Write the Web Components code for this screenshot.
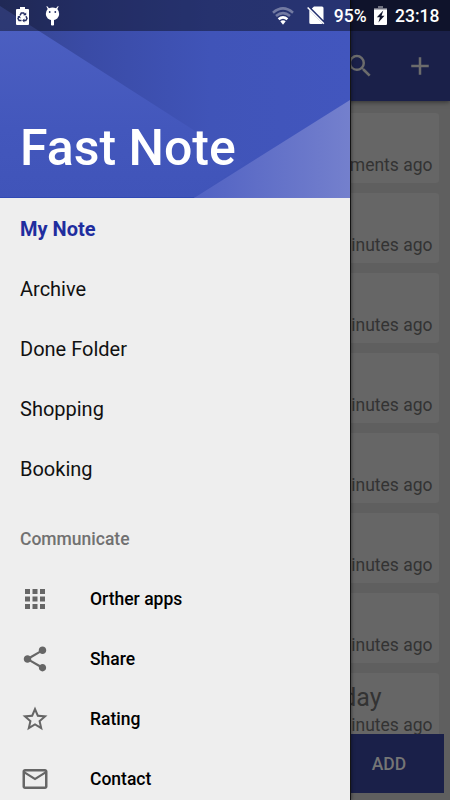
<!DOCTYPE html>
<html lang="en">
<head>
<meta charset="utf-8">
<title>Fast Note</title>
<style>
    body {
        margin: 0;
        font-family: Roboto, sans-serif;
    }
</style>
</head>
<body>
<fast-note-app></fast-note-app>

<script>
const ICONS = {
    search: '<path d="M15.5 14h-.79l-.28-.27A6.47 6.47 0 0 0 16 9.5 6.5 6.5 0 1 0 9.5 16c1.61 0 3.09-.59 4.23-1.57l.27.28v.79l5 4.99L20.49 19l-4.99-5zm-6 0C7.01 14 5 11.99 5 9.5S7.01 5 9.5 5 14 7.01 14 9.5 11.99 14 9.5 14z"/>',
    add: '<path d="M19 13h-6v6h-2v-6H5v-2h6V5h2v6h6v2z"/>',
    apps: '<path d="M4 8h4V4H4v4zm6 12h4v-4h-4v4zm-6 0h4v-4H4v4zm0-6h4v-4H4v4zm6 0h4v-4h-4v4zm6-10v4h4V4h-4zm-6 4h4V4h-4v4zm6 6h4v-4h-4v4zm0 6h4v-4h-4v4z"/>',
    share: '<path d="M18 16.08c-.76 0-1.44.3-1.96.77L8.91 12.7c.05-.23.09-.46.09-.7s-.04-.47-.09-.7l7.05-4.11c.54.5 1.25.81 2.04.81 1.66 0 3-1.34 3-3s-1.34-3-3-3-3 1.34-3 3c0 .24.04.47.09.7L8.04 9.81C7.5 9.31 6.79 9 6 9c-1.66 0-3 1.34-3 3s1.34 3 3 3c.79 0 1.5-.31 2.04-.81l7.12 4.16c-.05.21-.08.43-.08.65 0 1.61 1.31 2.92 2.92 2.92s2.92-1.31 2.92-2.92-1.31-2.92-2.92-2.92z"/>',
    star: '<path d="M22 9.24l-7.19-.62L12 2 9.19 8.63 2 9.24l5.46 4.73L5.82 21 12 17.27 18.18 21l-1.63-7.03L22 9.24zM12 15.4l-3.76 2.27 1-4.28-3.32-2.88 4.38-.38L12 6.1l1.71 4.04 4.38.38-3.32 2.88 1 4.28L12 15.4z"/>',
    mail: '<path d="M20 4H4c-1.1 0-1.99.9-1.99 2L2 18c0 1.1.9 2 2 2h16c1.1 0 2-.9 2-2V6c0-1.1-.9-2-2-2zm0 14H4V8l8 5 8-5v10zm-8-7L4 6h16l-8 5z"/>'
};

class MdIcon extends HTMLElement {
    constructor() {
        super();
        this.attachShadow({ mode: 'open' });
    }

    connectedCallback() {
        this.shadowRoot.innerHTML = `
            <style>
                :host { display: block; width: 30px; height: 30px; }
                svg { display: block; width: 100%; height: 100%; fill: currentColor; }
            </style>
            <svg viewBox="0 0 24 24">${ICONS[this.getAttribute('name')] || ''}</svg>
        `;
    }
}

// Translucent bar above everything else
class StatusBar extends HTMLElement {
    constructor() {
        super();
        this.attachShadow({ mode: 'open' });
    }

    connectedCallback() {
        this.shadowRoot.innerHTML = `
            <style>
                :host {
                    display: flex;
                    align-items: center;
                    box-sizing: border-box;
                    height: 31px;
                    padding: 0 10.5px 0 16px;
                    background: rgba(0, 0, 0, .4);
                    color: #fff;
                    font-size: 17.5px;
                    font-weight: 500;
                }
                svg { display: block; fill: #fff; flex: none; }
                span { padding-top: 1px; }
                .droid { margin-left: 16px; }
                .wifi { margin-left: auto; }
                .sim { margin: 0 9px 0 13px; }
                .battery { margin: 0 8px 0 7.5px; }
            </style>
            <svg width="13" height="18" viewBox="0 0 13 18">
                <path d="M4 0h5v2h3q1 0 1 1v14q0 1-1 1H1q-1 0-1-1V3q0-1 1-1h3z"/>
                <g fill="none" stroke="#252e63" stroke-width="1.5">
                    <path d="M4.1 8.3 5.3 6h2.4l1.1 2M10 9.3l1 2.2-1.2 2.1H7.5M5.5 13.6H3.1L2 11.5l1-2"/>
                </g>
                <path fill="#252e63" d="M7.2 8.3h3V5.6zM8.4 11.5v4L6.2 13.6zM1.3 9.5l2.5-.7 1 2.6z"/>
            </svg>
            <svg class="droid" width="15" height="20" viewBox="0 0 15 20">
                <path d="M2 0l2 2.2Q7.5.8 11 2.2L13 0l.6.6L12.3 3Q14.2 5 14.2 8a6.7 6.2 0 0 1-13.4 0Q.8 5 2.7 3L1.4.6z"/>
                <path d="M6 13h3v6q-1.5 1.2-3 0z"/>
                <circle cx="4.7" cy="6" r=".9" fill="#252e63"/>
                <circle cx="10.3" cy="6" r=".9" fill="#252e63"/>
            </svg>
            <svg class="wifi" width="22" height="18" viewBox="0 0 22 18">
                <g fill="none" stroke="#fff" stroke-width="2.6">
                    <path opacity=".35" d="M1 5.7Q11-2.8 21 5.7"/>
                    <path opacity=".35" d="M4 9Q11 3.1 18 9"/>
                    <path d="M6.6 12.3Q11 8.4 15.4 12.3"/>
                </g>
                <path d="M8.3 14.2Q11 12.2 13.7 14.2L11 17.8z"/>
            </svg>
            <svg class="sim" width="18" height="19" viewBox="0 0 18 19">
                <path d="M7 .5h8q1.5 0 1.5 1.5v12.3L4.8 2.6z"/>
                <path d="M2.3 4 15.5 17.2l-.8.8H3.8q-1.5 0-1.5-1.5z"/>
                <path d="M1.2 1 17.4 17.2l-1.1 1.1L.1 2.1z"/>
            </svg>
            <span>95%</span>
            <svg class="battery" width="13" height="19" viewBox="0 0 13 19">
                <path opacity=".4" d="M4 0h5v2h4v2H0V2h4z"/>
                <path fill-rule="evenodd" d="M0 3.5h13V18q0 1-1 1H1q-1 0-1-1zM9.3 4.6 2.8 11.2h3.1L4.4 16.6 10.5 9.8H7.5z"/>
            </svg>
            <span>23:18</span>
        `;
    }
}

class NoteCard extends HTMLElement {
    constructor() {
        super();
        this.attachShadow({ mode: 'open' });
    }

    connectedCallback() {
        this.shadowRoot.innerHTML = `
            <style>
                :host {
                    display: flex;
                    flex-direction: column;
                    justify-content: space-between;
                    align-items: flex-end;
                    box-sizing: border-box;
                    flex: none;
                    height: 70px;
                    padding: 8px 6.5px 7.5px;
                    border-radius: 3px;
                    background: #666;
                    color: #333;
                    font-size: 17.5px;
                    line-height: 20px;
                }
                .title {
                    padding-right: 51px;
                    font-size: 25px;
                    line-height: 33px;
                }
            </style>
            <div class="title"><slot name="title"></slot></div>
            <div><slot></slot></div>
        `;
    }
}

class NotePage extends HTMLElement {
    constructor() {
        super();
        this.attachShadow({ mode: 'open' });
    }

    connectedCallback() {
        this.shadowRoot.innerHTML = `
            <style>
                :host {
                    display: flex;
                    flex-direction: column;
                    height: 800px;
                    background: #5f5f5f;
                    overflow: hidden;
                }
                header {
                    display: flex;
                    justify-content: flex-end;
                    align-items: center;
                    flex: none;
                    box-sizing: border-box;
                    height: 101px;
                    padding: 31px 15px 0;
                    gap: 30px;
                    background: #1a2049;
                    color: #6c6c6c;
                    box-shadow: 0 1px 5px rgba(0, 0, 0, .5);
                }
                main {
                    display: flex;
                    flex-direction: column;
                    gap: 10px;
                    flex: 1;
                    min-height: 0;
                    overflow: hidden;
                    padding: 11.5px 11px 0;
                    box-sizing: border-box;
                }
                footer {
                    display: flex;
                    justify-content: flex-end;
                    flex: none;
                    height: 66.5px;
                    padding: 0 6px 0 0;
                }
                button {
                    width: 110px;
                    height: 59.5px;
                    padding: 1px 0 0;
                    border: 0;
                    background: #1a2049;
                    color: #757575;
                    font: 500 17.5px Roboto, sans-serif;
                }
            </style>
            <header>
                <md-icon name="search"></md-icon>
                <md-icon name="add"></md-icon>
            </header>
            <main><slot></slot></main>
            <footer><button>ADD</button></footer>
        `;
    }
}

class DrawerItem extends HTMLElement {
    constructor() {
        super();
        this.attachShadow({ mode: 'open' });
    }

    connectedCallback() {
        const icon = this.getAttribute('icon');
        this.shadowRoot.innerHTML = `
            <style>
                :host {
                    display: flex;
                    align-items: center;
                    flex: none;
                    height: 60px;
                    padding: 0 20px;
                    gap: 40px;
                    color: #111;
                    font-size: 20px;
                }
                :host([active]) { color: #1f2d9e; font-weight: 700; }
                :host([icon]) { color: #000; font-size: 17.5px; font-weight: 500; }
                :host([heading]) {
                    margin-top: 10px;
                    color: #717171;
                    font-size: 17.5px;
                    font-weight: 500;
                }
                md-icon { color: #666; margin-top: -1px; }
            </style>
            ${icon ? `<md-icon name="${icon}"></md-icon>` : ''}
            <span><slot></slot></span>
        `;
    }
}

class NavDrawer extends HTMLElement {
    constructor() {
        super();
        this.attachShadow({ mode: 'open' });
    }

    connectedCallback() {
        this.shadowRoot.innerHTML = `
            <style>
                :host {
                    display: flex;
                    flex-direction: column;
                    width: 350px;
                    height: 800px;
                    overflow: hidden;
                    background: #eee;
                }
                header {
                    display: grid;
                    flex: none;
                    height: 198px;
                    margin-bottom: 1px;
                }
                header > * { grid-area: 1 / 1; }
                svg { display: block; }
                h1 {
                    align-self: end;
                    margin: 0 0 21px 20px;
                    color: #fff;
                    font-size: 50px;
                    line-height: 58px;
                    font-weight: 500;
                }
            </style>
            <header>
                <svg width="350" height="198" viewBox="0 0 350 198">
                    <defs>
                        <linearGradient id="top">
                            <stop offset="0" stop-color="#36458f"/>
                            <stop offset=".25" stop-color="#3a4ba6"/>
                            <stop offset=".6" stop-color="#4054b8"/>
                            <stop offset="1" stop-color="#4256be"/>
                        </linearGradient>
                        <linearGradient id="left" gradientUnits="userSpaceOnUse" x1="0" y1="0" x2="0" y2="198">
                            <stop offset="0" stop-color="#4e61c2"/>
                            <stop offset=".65" stop-color="#4357bc"/>
                            <stop offset="1" stop-color="#4054b9"/>
                        </linearGradient>
                        <linearGradient id="corner">
                            <stop offset="0" stop-color="#5162c3"/>
                            <stop offset="1" stop-color="#7480cd"/>
                        </linearGradient>
                    </defs>
                    <path fill="url(#top)" d="M0 0h350v198H0z"/>
                    <path fill="url(#left)" d="M0 6 245 163 194 198H0z"/>
                    <path fill="url(#corner)" d="M194 198 350 100v98z"/>
                    <path fill="#3049b5" d="M0 197h194v1H0z"/>
                </svg>
                <h1>Fast Note</h1>
            </header>
            <slot></slot>
        `;
    }
}

class FastNoteApp extends HTMLElement {
    constructor() {
        super();
        this.attachShadow({ mode: 'open' });
    }

    connectedCallback() {
        const cards = ['ments ago'].concat(Array(6).fill('inutes ago'))
            .map(time => `<note-card>${time}</note-card>`).join('');

        this.shadowRoot.innerHTML = `
            <style>
                :host {
                    display: block;
                    position: relative;
                    width: 450px;
                    height: 800px;
                    overflow: hidden;
                }
                nav-drawer {
                    position: absolute;
                    top: 0;
                    left: 0;
                    box-shadow: 1px 0 0 #141414, 2px 0 3px rgba(0, 0, 0, .35);
                }
                status-bar {
                    position: absolute;
                    top: 0;
                    left: 0;
                    right: 0;
                }
            </style>
            <note-page>
                ${cards}
                <note-card><span slot="title">day</span>inutes ago</note-card>
            </note-page>
            <nav-drawer>
                <drawer-item active>My Note</drawer-item>
                <drawer-item>Archive</drawer-item>
                <drawer-item>Done Folder</drawer-item>
                <drawer-item>Shopping</drawer-item>
                <drawer-item>Booking</drawer-item>
                <drawer-item heading>Communicate</drawer-item>
                <drawer-item icon="apps">Orther apps</drawer-item>
                <drawer-item icon="share">Share</drawer-item>
                <drawer-item icon="star">Rating</drawer-item>
                <drawer-item icon="mail">Contact</drawer-item>
            </nav-drawer>
            <status-bar></status-bar>
        `;
    }
}

customElements.define('md-icon', MdIcon);
customElements.define('status-bar', StatusBar);
customElements.define('note-card', NoteCard);
customElements.define('note-page', NotePage);
customElements.define('drawer-item', DrawerItem);
customElements.define('nav-drawer', NavDrawer);
customElements.define('fast-note-app', FastNoteApp);
</script>
</body>
</html>
